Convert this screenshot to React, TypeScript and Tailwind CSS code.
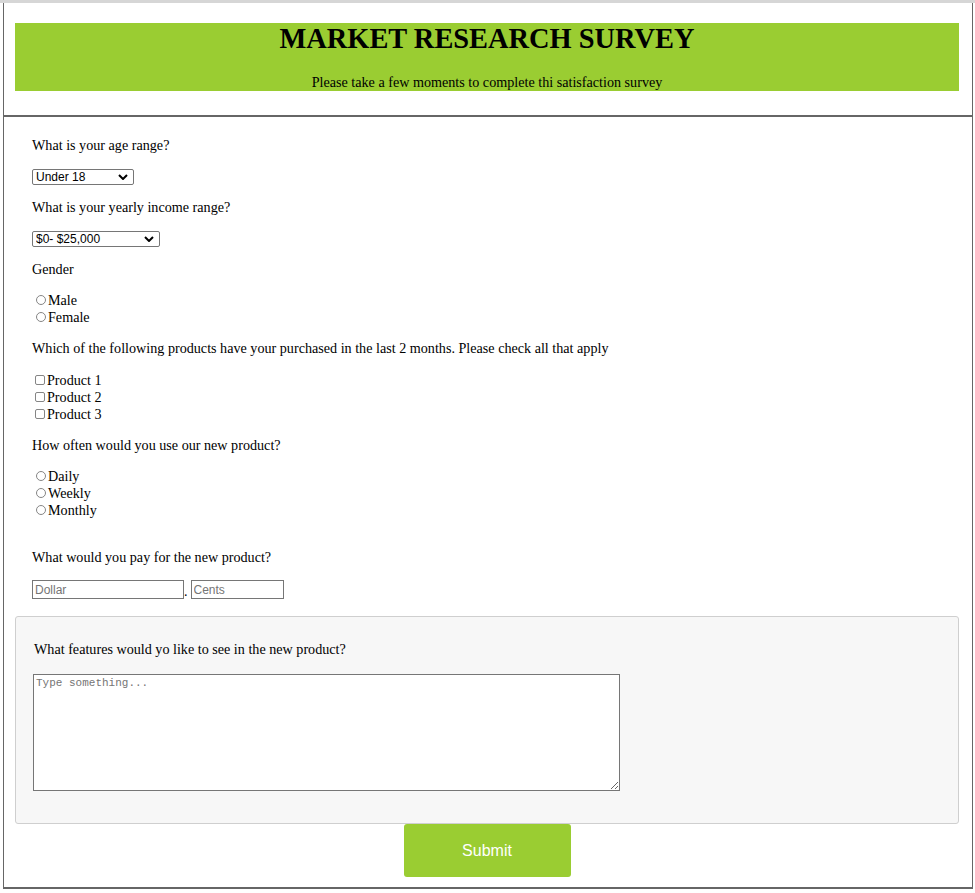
import type { ReactNode } from "react";

const serif = "font-['Liberation_Serif','Times_New_Roman',serif]";
const sans = "font-['Liberation_Sans',Arial,sans-serif]";

function Question({ children, className = "" }: { children: ReactNode; className?: string }) {
  return <p className={`text-[14.15px] leading-[16px] text-black ${className}`}>{children}</p>;
}

function Dropdown({ options, className }: { options: string[]; className: string }) {
  return (
    <div className={`relative h-[16px] ${className}`}>
      <select
        className={`block h-[16px] w-full appearance-none rounded-[2px] border border-[#767676] bg-white py-0 pl-[3px] pr-[18px] text-[12px] leading-[14px] text-black ${sans}`}
      >
        {options.map((o) => (
          <option key={o}>{o}</option>
        ))}
      </select>
      <svg
        className="pointer-events-none absolute right-[6px] top-[5px]"
        width="10"
        height="6"
        viewBox="0 0 10 6"
      >
        <path d="M1 1L5 5L9 1" fill="none" stroke="#000" strokeWidth="2" />
      </svg>
    </div>
  );
}

function Choice({ name, label, type }: { name: string; label: string; type: "radio" | "checkbox" }) {
  return (
    <label className="flex h-[17px] items-center text-[14.15px] leading-[16px]">
      {type === "radio" ? (
        <input
          type="radio"
          name={name}
          className="ml-[4px] h-[10px] w-[10px] appearance-none rounded-full border border-[#858585] bg-white checked:border-[3px] checked:border-[#0075ff]"
        />
      ) : (
        <input
          type="checkbox"
          name={name}
          className="ml-[3px] h-[10px] w-[10px] appearance-none rounded-[2px] border border-[#858585] bg-white checked:border-[#0075ff] checked:bg-[#0075ff]"
        />
      )}
      <span className="ml-[2px]">{label}</span>
    </label>
  );
}

export default function App() {
  return (
    <div className={`min-h-screen bg-white text-black ${serif}`}>
      <div className="h-[3px] bg-[#d6d6d6]" />
      <form
        className="ml-[3px] w-[970px] border-x border-b-2 border-[#666]"
        onSubmit={(e) => e.preventDefault()}
      >
        <header className="pb-[24px] pl-[11px] pr-[13px] pt-[20px]">
          <div className="h-[68px] bg-[#9acd32] text-center">
            <h1 className="text-[28.4px] font-bold leading-[32px]">MARKET RESEARCH SURVEY</h1>
            <p className="mt-[19px] text-[14.15px] leading-[16px]">
              Please take a few moments to complete thi satisfaction survey
            </p>
          </div>
        </header>
        <div className="h-[2px] bg-[#666]" />

        <section className="flex flex-col items-start pl-[28px] pt-[20px]">
          <Question>What is your age range?</Question>
          <Dropdown
            className="mt-[16px] w-[102px]"
            options={["Under 18", "18 - 24", "25 - 34", "35 - 44", "45 - 54", "55 and over"]}
          />

          <Question className="mt-[14px]">What is your yearly income range?</Question>
          <Dropdown
            className="mt-[16px] w-[128px]"
            options={["$0- $25,000", "$25,001- $50,000", "$50,001- $75,000", "$75,001- $100,000", "Over $100,000"]}
          />

          <Question className="mt-[14px]">Gender</Question>
          <div className="mt-[14px]">
            <Choice type="radio" name="gender" label="Male" />
            <Choice type="radio" name="gender" label="Female" />
          </div>

          <Question className="mt-[15px]">
            Which of the following products have your purchased in the last 2 months. Please check all
            that apply
          </Question>
          <div className="mt-[15px]">
            <Choice type="checkbox" name="product1" label="Product 1" />
            <Choice type="checkbox" name="product2" label="Product 2" />
            <Choice type="checkbox" name="product3" label="Product 3" />
          </div>

          <Question className="mt-[15px]">How often would you use our new product?</Question>
          <div className="mt-[14px]">
            <Choice type="radio" name="often" label="Daily" />
            <Choice type="radio" name="often" label="Weekly" />
            <Choice type="radio" name="often" label="Monthly" />
          </div>

          <Question className="mt-[31px]">What would you pay for the new product?</Question>
          <div className="mt-[15px] flex items-end">
            <input
              placeholder="Dollar"
              className={`h-[19px] w-[152px] border border-[#767676] bg-white px-[2px] text-[12px] placeholder:text-[#757575] ${sans}`}
            />
            <span className="text-[14px] leading-[14px]">.</span>
            <input
              placeholder="Cents"
              className={`ml-[3px] h-[19px] w-[93px] border border-[#767676] bg-white px-[2px] text-[12px] placeholder:text-[#757575] ${sans}`}
            />
          </div>
        </section>

        <div className="mt-[17px] pl-[11px] pr-[13px]">
          <div className="h-[208px] rounded-[3px] border border-[#cfcfcf] bg-[#f7f7f7] pl-[17px] pt-[24px]">
            <Question className="ml-[1px]">What features would yo like to see in the new product?</Question>
            <textarea
              placeholder="Type something..."
              className="mt-[17px] block h-[117px] w-[587px] border border-[#767676] bg-white p-[2px] font-['Liberation_Mono',monospace] text-[11px] leading-[13px] placeholder:text-[#757575]"
            />
          </div>
        </div>

        <div className="flex justify-center pb-[10px] pr-[2px]">
          <button
            type="submit"
            className={`h-[53px] w-[167px] rounded-[3px] bg-[#9acd32] text-[16px] text-white ${sans}`}
          >
            Submit
          </button>
        </div>
      </form>
    </div>
  );
}
